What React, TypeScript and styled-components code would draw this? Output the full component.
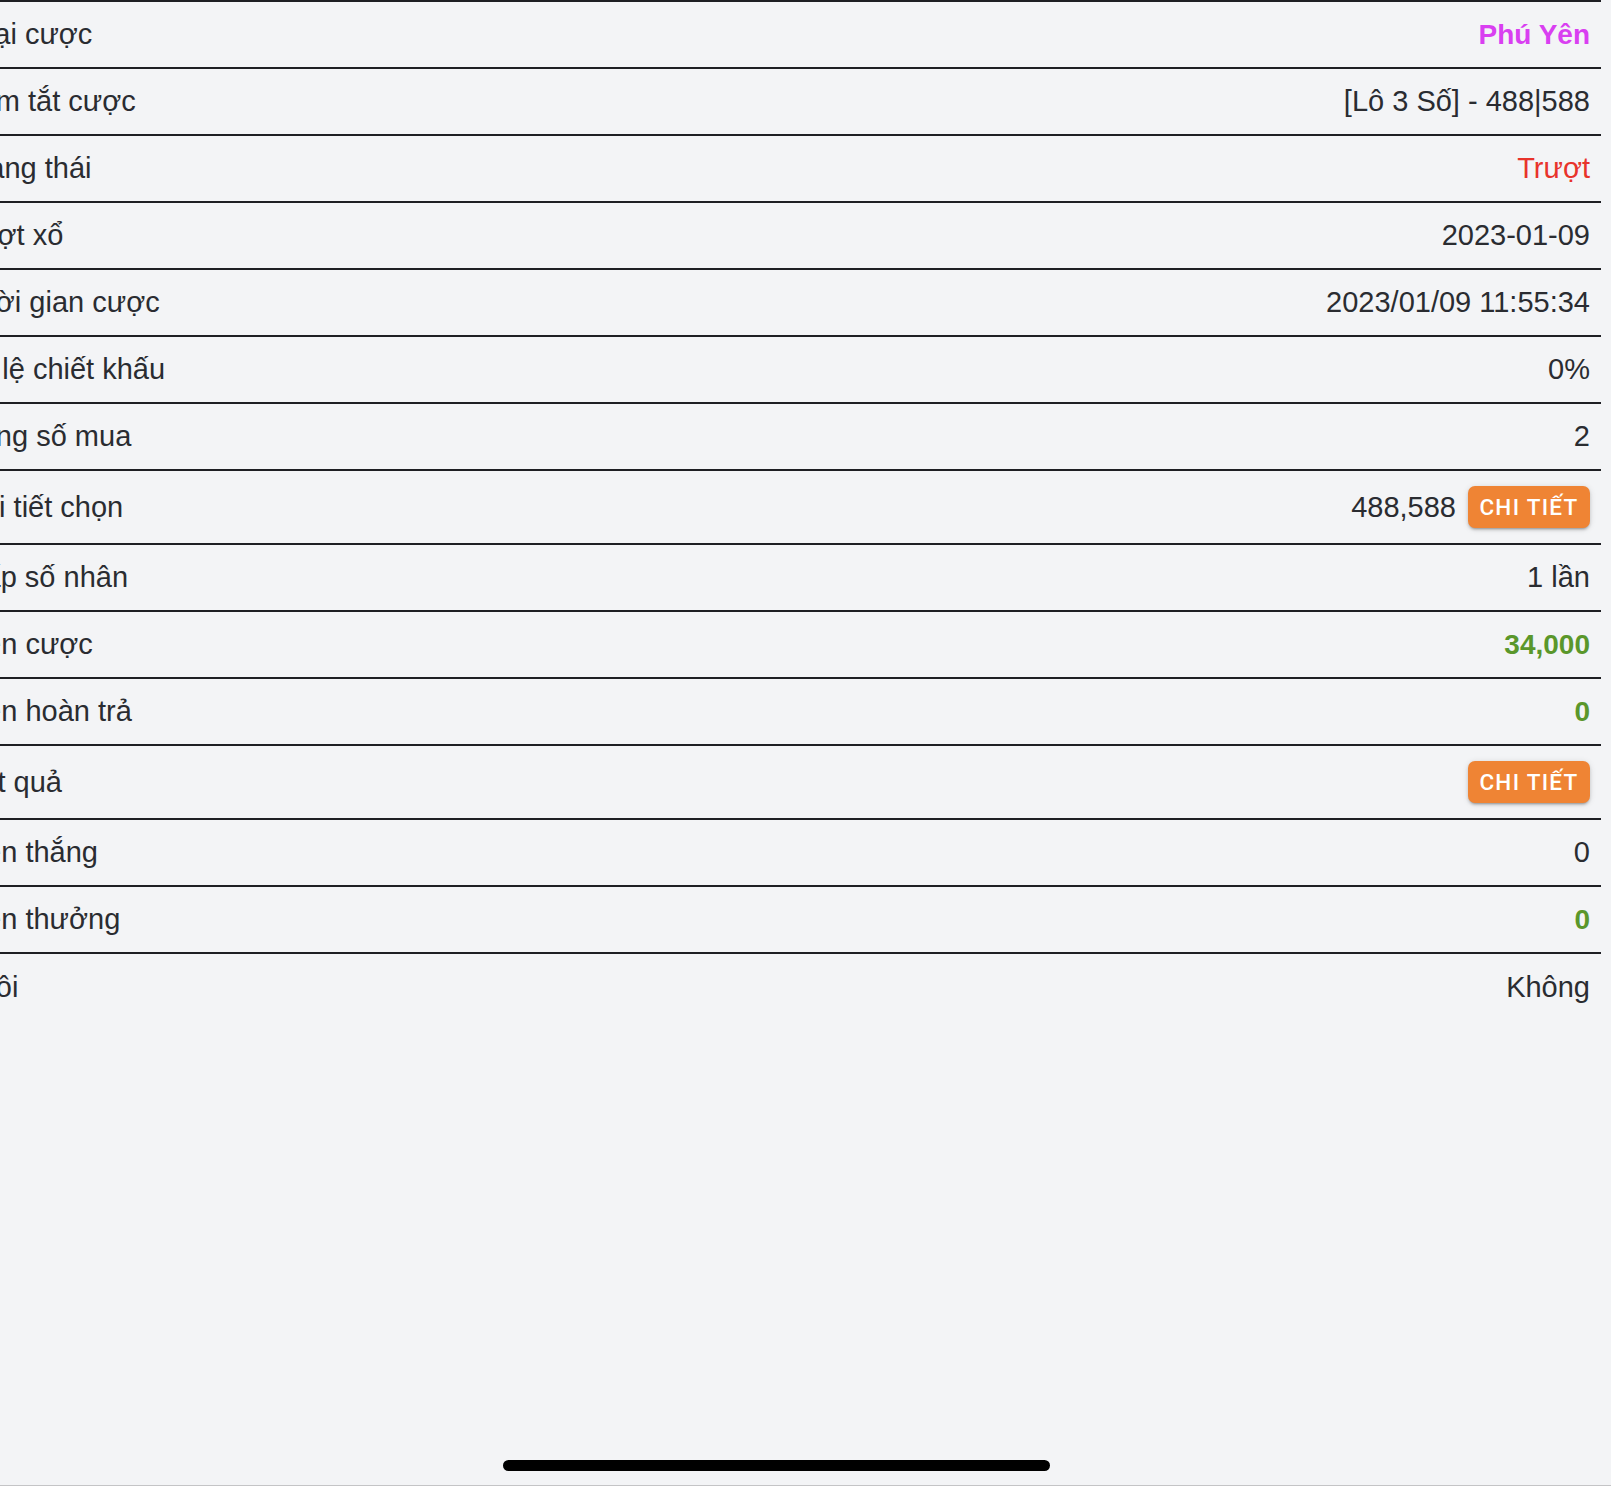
import React from "react";
import styled, { createGlobalStyle } from "styled-components";

type Tone = "default" | "magenta" | "red" | "green";

type Detail = {
  label: string;
  value?: string;
  tone?: Tone;
  bold?: boolean;
  action?: boolean;
};

const details: Detail[] = [
  { label: "Loại cược", value: "Phú Yên", tone: "magenta", bold: true },
  { label: "Tóm tắt cược", value: "[Lô 3 Số] - 488|588" },
  { label: "Trạng thái", value: "Trượt", tone: "red" },
  { label: "Lượt xổ", value: "2023-01-09" },
  { label: "Thời gian cược", value: "2023/01/09 11:55:34" },
  { label: "Tỷ lệ chiết khấu", value: "0%" },
  { label: "Tổng số mua", value: "2" },
  { label: "Chi tiết chọn", value: "488,588", action: true },
  { label: "Gấp số nhân", value: "1 lần" },
  { label: "Tiền cược", value: "34,000", tone: "green", bold: true },
  { label: "Tiền hoàn trả", value: "0", tone: "green", bold: true },
  { label: "Kết quả", action: true },
  { label: "Tiền thắng", value: "0" },
  { label: "Tiền thưởng", value: "0", tone: "green", bold: true },
  { label: "Thôi", value: "Không" },
];

const toneColors: Record<Tone, string> = {
  default: "#2a2c31",
  magenta: "#d93ff1",
  red: "#e8332b",
  green: "#5a972b",
};

export default function App() {
  return (
    <>
      <GlobalStyle />
      <Screen>
        <DetailList>
          {details.map((d) => (
            <Row key={d.label}>
              <Label>{d.label}</Label>
              <ValueGroup>
                {d.value && (
                  <Value $tone={d.tone || "default"} $bold={!!d.bold}>
                    {d.value}
                  </Value>
                )}
                {d.action && <DetailButton>Chi tiết</DetailButton>}
              </ValueGroup>
            </Row>
          ))}
        </DetailList>
        <HomeIndicator />
      </Screen>
    </>
  );
}

const GlobalStyle = createGlobalStyle`
  html, body {
    margin: 0;
    padding: 0;
    background: #f3f4f6;
    overflow: hidden;
  }
  * {
    box-sizing: border-box;
  }
`;

const Screen = styled.div`
  min-height: 100vh;
  background: #f3f4f6;
  border-bottom: 1px solid #c4c4c6;
  font-family: "Liberation Sans", Arial, sans-serif;
  color: #2a2c31;
`;

const DetailList = styled.div`
  margin: 0 10px 0 -38px;
  border-top: 2px solid #1e1f23;
`;

const Row = styled.div`
  display: flex;
  align-items: center;
  justify-content: space-between;
  min-height: 67px;
  padding: 15px 11px 15px 0;
  border-bottom: 2px solid #1e1f23;

  &:last-child {
    border-bottom: none;
  }
`;

const Label = styled.div`
  font-size: 29px;
  line-height: 33px;
  white-space: nowrap;
`;

const ValueGroup = styled.div`
  display: flex;
  align-items: center;
  gap: 12px;
`;

const Value = styled.div<{ $tone: Tone; $bold: boolean }>`
  font-size: ${(p) => (p.$bold ? "28px" : "29px")};
  line-height: 33px;
  font-weight: ${(p) => (p.$bold ? 700 : 400)};
  color: ${(p) => toneColors[p.$tone]};
  white-space: nowrap;
`;

const DetailButton = styled.button`
  height: 42px;
  width: 122px;
  padding: 0 8px;
  border: none;
  border-radius: 7px;
  background: #ef8434;
  color: #fff;
  font-family: Roboto, "Liberation Sans", sans-serif;
  font-size: 22.5px;
  font-weight: 500;
  letter-spacing: 1.3px;
  text-transform: uppercase;
  white-space: nowrap;
  box-shadow: 0 3px 2px -2px rgba(0, 0, 0, 0.2), 0 2px 3px rgba(0, 0, 0, 0.14),
    0 1px 6px rgba(0, 0, 0, 0.12);
  cursor: pointer;
`;

const HomeIndicator = styled.div`
  position: fixed;
  left: 503px;
  bottom: 15px;
  width: 547px;
  height: 11px;
  border-radius: 6px;
  background: #000;
`;
